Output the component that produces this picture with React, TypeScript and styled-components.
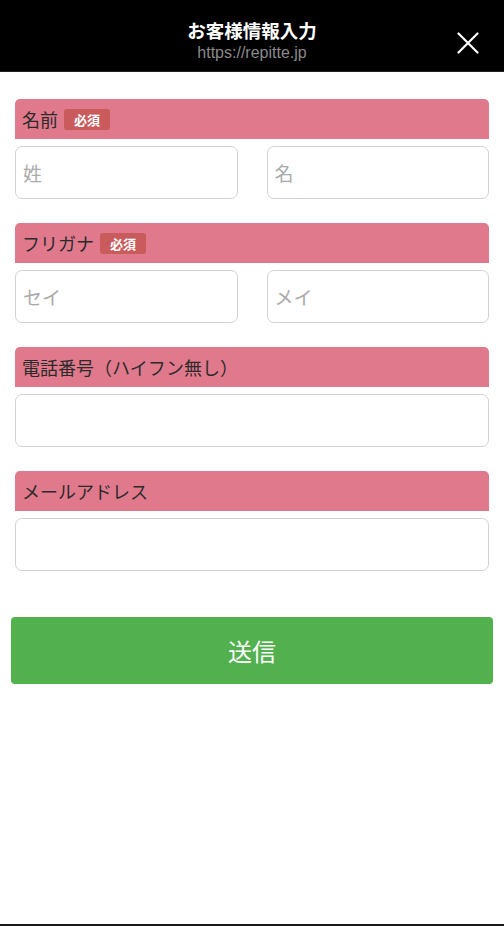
import React from "react";
import styled, { createGlobalStyle } from "styled-components";

const Global = createGlobalStyle`
  html, body { margin: 0; padding: 0; background: #fff; }
  body { font-family: "Noto Sans CJK JP", "Noto Sans", sans-serif; }
  * { box-sizing: border-box; }
`;

const Page = styled.div`
  width: 504px;
  height: 926px;
  display: flex;
  flex-direction: column;
  border-bottom: 2px solid #1a1a1a;
`;

const TopBar = styled.header`
  height: 72px;
  background: #000;
  border-bottom: 1px solid #222;
  position: relative;
  display: flex;
  flex-direction: column;
  align-items: center;
  padding-top: 17px;
`;

const Title = styled.div`
  color: #fff;
  font-size: 18.5px;
  font-weight: 700;
  line-height: 26px;
`;

const Url = styled.div`
  color: #8a8a8a;
  font-family: "Liberation Sans", Arial, sans-serif;
  font-size: 16px;
  line-height: 18px;
  margin-top: 1px;
`;

const Close = styled.button`
  position: absolute;
  right: 25px;
  top: 32px;
  width: 22px;
  height: 22px;
  padding: 0;
  border: 0;
  background: none;
  display: flex;
`;

const Form = styled.form`
  display: flex;
  flex-direction: column;
  padding: 27px 15px 0;
  gap: 24px;
`;

const Field = styled.div`
  display: flex;
  flex-direction: column;
  gap: 7px;
`;

const Head = styled.div`
  height: 40px;
  background: #e0798b;
  border-radius: 5px 5px 0 0;
  display: flex;
  align-items: center;
  padding-left: 7px;
  gap: 6px;
  color: #2b2b2b;
  font-size: 18px;
`;

const Badge = styled.span`
  display: inline-flex;
  align-items: center;
  justify-content: center;
  width: 46px;
  height: 21px;
  background: #c95b5c;
  color: #fff;
  font-size: 13px;
  font-weight: 700;
  border-radius: 3px;
`;

const Row = styled.div<{ $split?: boolean }>`
  display: grid;
  grid-template-columns: ${(p) => (p.$split ? "1fr 1fr" : "1fr")};
  column-gap: 29px;
`;

const Input = styled.input`
  height: 53px;
  width: 100%;
  border: 1.5px solid #d2d2d2;
  border-radius: 7px;
  padding: 0 7px;
  font-family: "Noto Sans CJK JP", sans-serif;
  font-size: 19px;
  color: #333;
  background: #fff;
  &::placeholder { color: #aaaaaa; }
`;

const Submit = styled.button`
  margin: 46px 11px 0;
  height: 67px;
  background: #52b14e;
  color: #fff;
  border: 0;
  border-radius: 4px;
  font-family: "Noto Sans CJK JP", sans-serif;
  font-size: 24px;
  padding-bottom: 2px;
`;

export default function App() {
  return (
    <Page>
      <Global />
      <TopBar>
        <Title>お客様情報入力</Title>
        <Url>https://repitte.jp</Url>
        <Close aria-label="close">
          <svg width="22" height="22" viewBox="0 0 22 22">
            <path d="M1.5 1.5 L20.5 20.5 M20.5 1.5 L1.5 20.5" stroke="#fff" strokeWidth="2.2" strokeLinecap="round" />
          </svg>
        </Close>
      </TopBar>
      <Form onSubmit={(e) => e.preventDefault()}>
        <Field>
          <Head>名前<Badge>必須</Badge></Head>
          <Row $split>
            <Input placeholder="姓" />
            <Input placeholder="名" />
          </Row>
        </Field>
        <Field>
          <Head>フリガナ<Badge>必須</Badge></Head>
          <Row $split>
            <Input placeholder="セイ" />
            <Input placeholder="メイ" />
          </Row>
        </Field>
        <Field>
          <Head>電話番号（ハイフン無し）</Head>
          <Row>
            <Input />
          </Row>
        </Field>
        <Field>
          <Head>メールアドレス</Head>
          <Row>
            <Input />
          </Row>
        </Field>
      </Form>
      <Submit type="button">送信</Submit>
    </Page>
  );
}
